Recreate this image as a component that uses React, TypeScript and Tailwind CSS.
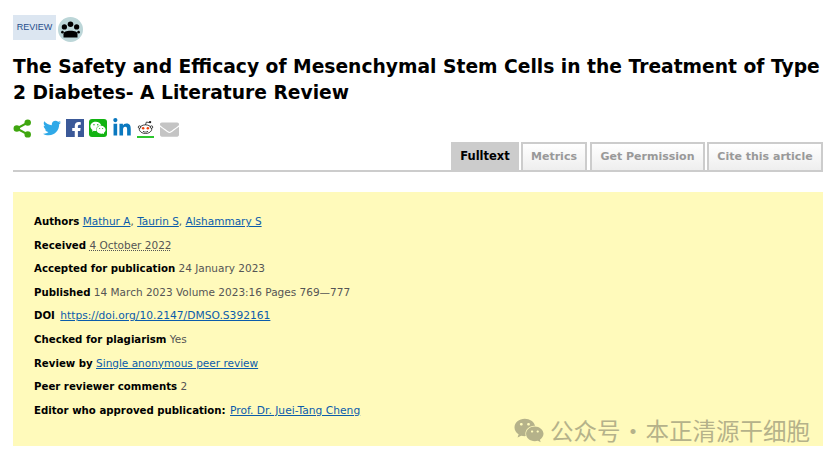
import React from 'react';
import { FaFacebookF, FaLinkedinIn, FaTwitter, FaWeixin, FaEnvelope } from 'react-icons/fa';

const MetaRow: React.FC<{ label: string; children?: React.ReactNode }> = ({ label, children }) => (
  <p className="h-[23.6px] leading-[23.6px] whitespace-nowrap">
    <strong className="font-bold text-[10.2px] text-black">{label}</strong> {children}
  </p>
);

const MetaLink: React.FC<{ children: React.ReactNode; className?: string }> = ({ children, className }) => (
  <a href="#" className={`text-[#0b5cab] underline ${className ?? ''}`}>{children}</a>
);

const Tab: React.FC<{ label: string; active?: boolean; className?: string }> = ({ label, active, className }) => (
  <a
    href="#"
    className={`h-[28px] flex items-center justify-center font-bold border-[2px] border-b-0 border-[#ccc] ${
      active ? 'bg-[#ccc] text-black text-[11.5px]' : 'bg-gradient-to-b from-white to-[#eee] text-[#999] text-[11px]'
    } ${className}`}
  >
    {label}
  </a>
);

const App: React.FC = () => {
  return (
    <div className="relative w-[838px] h-[465px] overflow-hidden bg-white font-['DejaVu_Sans','Verdana',sans-serif] pl-[13px] pr-[15px] pt-[15px]">
      {/* badge + avatar */}
      <div className="flex items-center gap-[2px] h-[27px]">
        <span className="w-[43px] h-[25px] mb-[2px] bg-[#dce6f1] text-[#1f4e8c] flex items-center justify-center font-['Liberation_Sans',sans-serif] text-[9px]">REVIEW</span>
        <span className="w-[25px] h-[25px] mt-[2px] rounded-full bg-[#bcd6d8] flex items-center justify-center">
          <svg viewBox="0 0 24 24" className="w-[21px] h-[21px]" fill="#000">
            <circle cx="12" cy="6" r="3.200" />
            <circle cx="5" cy="9" r="3" />
            <circle cx="19" cy="9" r="3" />
            <path d="M4 21v-3.500C4 14.500 7 13.500 12 13.500s8 1 8 4V21z" />
            <circle cx="2.800" cy="15" r="1.500" />
            <circle cx="21.200" cy="15" r="1.500" />
          </svg>
        </span>
      </div>

      <h1 className="mt-[12px] text-[18.7px] leading-[26px] font-bold text-black">
        The Safety and Efficacy of Mesenchymal Stem Cells in the Treatment of Type 2 Diabetes- A Literature Review
      </h1>

      {/* share icons */}
      <div className="mt-[11px] h-[22px] flex items-center">
        <svg viewBox="0 0 20 20" className="w-[19px] h-[19px]" fill="#3fa60f">
          <circle cx="15.500" cy="3.800" r="3.400" />
          <circle cx="4" cy="10" r="3.400" />
          <circle cx="15.500" cy="16.200" r="3.400" />
          <path d="M4 10 15.500 3.800M4 10l11.500 6.200" stroke="#3fa60f" strokeWidth="2.200" />
        </svg>
        <FaTwitter className="ml-[11px] w-[18px] h-[18px] text-[#2fa9e8]" />
        <span className="ml-[5px] w-[18px] h-[18px] bg-[#3b5998] flex items-end justify-end overflow-hidden">
          <FaFacebookF className="w-[15px] h-[16px] -mb-[1px] text-white" />
        </span>
        <FaWeixin className="ml-[5px] w-[18px] h-[18px] p-[1px] rounded-[3px] bg-[#12b312] text-white" />
        <FaLinkedinIn className="ml-[5px] w-[20px] h-[20px] text-[#0a78bf]" />
        <span className="ml-[5px] w-[17px] h-[20px] border-b-[2px] border-[#2ec72e] flex items-center justify-center">
          <svg viewBox="0 0 20 18" className="w-[17px] h-[15px]">
            <ellipse cx="10" cy="11" rx="7.500" ry="5.200" fill="#fff" stroke="#222" strokeWidth="1" />
            <circle cx="2.800" cy="8.500" r="1.500" fill="#fff" stroke="#222" />
            <circle cx="17.200" cy="8.500" r="1.500" fill="#fff" stroke="#222" />
            <circle cx="15.500" cy="2.500" r="1.400" fill="#222" />
            <path d="M10 6 11 2.500l3.500.5" fill="none" stroke="#222" />
            <circle cx="7.200" cy="10" r="1.500" fill="#f0400c" />
            <circle cx="12.800" cy="10" r="1.500" fill="#f0400c" />
            <path d="M7 13.500c2 1.300 4 1.300 6 0" fill="none" stroke="#222" />
          </svg>
        </span>
        <FaEnvelope className="ml-[6px] w-[19px] h-[19px] mt-[2px] text-[#c4c4c4]" />
      </div>

      {/* tabs */}
      <div className="mt-[3px] h-[28px] flex justify-end border-b-[2px] border-[#ccc] box-content">
        <Tab label="Fulltext" active className="w-[68px]" />
        <Tab label="Metrics" className="ml-[2px] w-[66px]" />
        <Tab label="Get Permission" className="ml-[3px] w-[115px]" />
        <Tab label="Cite this article" className="ml-[2px] w-[116px]" />
      </div>

      {/* article info */}
      <div className="mt-[20px] h-[254px] bg-[#fffabb] pl-[21px] pt-[18px] text-[10.5px] text-[#555]">
        <MetaRow label="Authors">
          <MetaLink>Mathur A</MetaLink>, <MetaLink>Taurin S</MetaLink>, <MetaLink>Alshammary S</MetaLink>
        </MetaRow>
        <MetaRow label="Received">
          <span className="underline decoration-dotted">4 October 2022</span>
        </MetaRow>
        <MetaRow label="Accepted for publication">24 January 2023</MetaRow>
        <MetaRow label="Published">14 March 2023 Volume 2023:16 Pages 769—777</MetaRow>
        <MetaRow label="DOI">
          <MetaLink className="ml-[2px] text-[10.7px]">https://doi.org/10.2147/DMSO.S392161</MetaLink>
        </MetaRow>
        <MetaRow label="Checked for plagiarism">Yes</MetaRow>
        <MetaRow label="Review by">
          <MetaLink>Single anonymous peer review</MetaLink>
        </MetaRow>
        <MetaRow label="Peer reviewer comments">2</MetaRow>
        <MetaRow label="Editor who approved publication:">
          <MetaLink className="ml-[1px] text-[10.7px]">Prof. Dr. Juei-Tang Cheng</MetaLink>
        </MetaRow>
      </div>

      {/* watermark */}
      <div className="absolute left-[513px] top-[417px] flex items-center gap-[5px] text-[#b5b28a]">
        <FaWeixin className="w-[32px] h-[27px]" />
        <span className="flex text-[23.5px] leading-[27px] font-['Noto_Sans_CJK_SC',sans-serif] whitespace-nowrap">
          公众号<span className="w-[25px] text-center">·</span>本正清源干细胞
        </span>
      </div>
    </div>
  );
};

export default App;
